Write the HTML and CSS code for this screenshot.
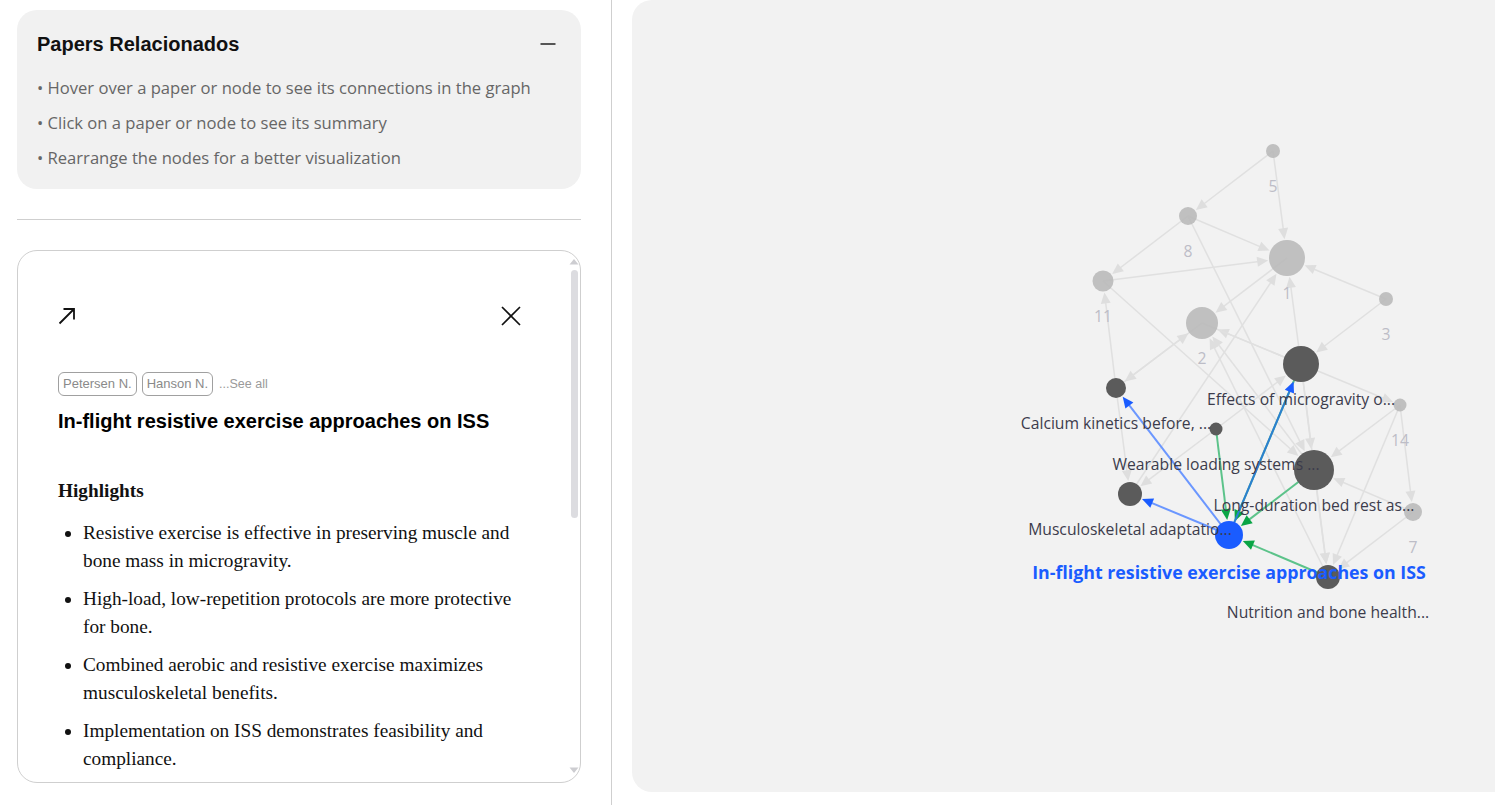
FILE: index.html
```html
<!DOCTYPE html>
<html lang="en">
<head>
<meta charset="utf-8">
<title>Papers Relacionados</title>
<link rel="stylesheet" href="styles.css">
</head>
<body>
<div class="layout">
  <aside class="sidebar">
    <section class="info-card">
      <div class="info-head">
        <h2 class="info-title">Papers Relacionados</h2>
        <button class="icon-btn" aria-label="Collapse">
          <svg width="16" height="16" viewBox="0 0 16 16"><line x1="0.5" y1="8" x2="15.5" y2="8" stroke="#222" stroke-width="1.5"/></svg>
        </button>
      </div>
      <ul class="tips">
        <li>• Hover over a paper or node to see its connections in the graph</li>
        <li>• Click on a paper or node to see its summary</li>
        <li>• Rearrange the nodes for a better visualization</li>
      </ul>
    </section>
    <hr class="divider">
    <article class="paper-card">
      <div class="paper-scroll">
        <div class="paper-actions">
          <button class="icon-btn" aria-label="Open paper">
            <svg width="18" height="18" viewBox="0 0 18 18"><path d="M1.5 16.5 L16 2 M5.5 2 H16 V12.5" fill="none" stroke="#111" stroke-width="1.8"/></svg>
          </button>
          <button class="icon-btn" aria-label="Close">
            <svg width="20" height="20" viewBox="0 0 20 20"><path d="M1 1 L19 19 M19 1 L1 19" fill="none" stroke="#111" stroke-width="1.7"/></svg>
          </button>
        </div>
        <div class="authors">
          <span class="chip">Petersen N.</span>
          <span class="chip">Hanson N.</span>
          <span class="see-all">...See all</span>
        </div>
        <h3 class="paper-title">In-flight resistive exercise approaches on ISS</h3>
        <h4 class="section-title">Highlights</h4>
        <ul class="highlights">
          <li>Resistive exercise is effective in preserving muscle and bone mass in microgravity.</li>
          <li>High-load, low-repetition protocols are more protective for bone.</li>
          <li>Combined aerobic and resistive exercise maximizes musculoskeletal benefits.</li>
          <li>Implementation on ISS demonstrates feasibility and compliance.</li>
        </ul>
      </div>
      <div class="scrollbar" aria-hidden="true">
        <svg class="sb-arrow" width="12" height="7" viewBox="0 0 12 7"><path d="M1.5 6.5 L6 1 L10.5 6.5 Z" fill="#cdcdd1"/></svg>
        <div class="sb-thumb"></div>
        <div class="sb-space"></div>
        <svg class="sb-arrow sb-down" width="12" height="7" viewBox="0 0 12 7"><path d="M1.5 0.5 L6 6 L10.5 0.5 Z" fill="#cdcdd1"/></svg>
      </div>
    </article>
  </aside>
  <main class="graph-area">
    <div class="graph-panel">
      <svg id="graph" class="graph" width="883" height="792" viewBox="632 0 883 792" xmlns="http://www.w3.org/2000/svg"></svg>
    </div>
  </main>
</div>
<script src="script.js"></script>
</body>
</html>
```

FILE: styles.css
```css
* { box-sizing: border-box; }
html, body { margin: 0; height: 100%; }
body {
  font-family: "Liberation Sans", Arial, sans-serif;
  background: #fff;
  color: #111;
  overflow: hidden;
}
.layout { display: flex; height: 805px; }

.sidebar {
  width: 612px;
  flex: none;
  border-right: 1px solid #cfcfcf;
  padding: 10px 30px 0 17px;
}
.info-card {
  background: #f1f1f1;
  border-radius: 20px;
  padding: 23px 25px 13px 20px;
  height: 179px;
}
.info-head { display: flex; justify-content: space-between; align-items: center; }
.info-title { margin: 0; font-size: 20px; line-height: 22px; font-weight: 700; color: #111; }
.icon-btn { border: 0; background: none; padding: 0; margin: 0; display: flex; cursor: pointer; }
.tips {
  list-style: none;
  margin: 15px 0 0;
  padding: 0;
  font-family: "Open Sans", sans-serif;
  font-size: 16.6px;
  line-height: 35px;
  color: #666;
}
.divider { border: 0; border-top: 1px solid #cfcfcf; margin: 30px 0 0; }

.paper-card {
  margin-top: 30px;
  height: 533px;
  border: 1px solid #cfcfcf;
  border-radius: 20px;
  overflow: hidden;
  background: #fff;
  display: flex;
}
.paper-scroll {
  flex: 1;
  min-width: 0;
  overflow: hidden;
  padding: 55px 47px 0 40px;
}
.scrollbar {
  flex: none;
  width: 12px;
  display: flex;
  flex-direction: column;
  align-items: center;
  padding: 7px 0 8px;
}
.sb-arrow { display: block; flex: none; }
.sb-thumb {
  width: 7px;
  height: 248px;
  margin-top: 5px;
  border-radius: 4px;
  background: #dcdce0;
  flex: none;
}
.sb-space { flex: 1; }

.paper-actions { display: flex; justify-content: space-between; align-items: center; height: 20px; }
.authors { display: flex; align-items: center; gap: 5px; margin-top: 46px; }
.chip {
  border: 1px solid #a0a0a0;
  border-radius: 6px;
  color: #8a8a8a;
  font-size: 13px;
  line-height: 22px;
  padding: 0 4px;
}
.see-all { color: #9a9a9a; font-size: 12.5px; margin-left: 1px; }
.paper-title { margin: 13px 0 0; font-size: 20px; line-height: 24px; font-weight: 700; color: #000; }
.section-title {
  margin: 46px 0 0;
  font-family: "Liberation Serif", "Times New Roman", serif;
  font-size: 19.3px;
  line-height: 24px;
  font-weight: 700;
}
.highlights {
  margin: 16px 0 0;
  padding-left: 25px;
  font-family: "Liberation Serif", "Times New Roman", serif;
  font-size: 19.3px;
  line-height: 28px;
  color: #111;
}
.highlights li { margin-bottom: 10px; }

.graph-area { flex: 1; min-width: 0; padding-left: 20px; }
.graph-panel {
  width: 883px;
  height: 792px;
  background: #f2f2f2;
  border-radius: 20px;
  overflow: hidden;
}
.graph { display: block; font-family: "Open Sans", "Noto Sans", sans-serif; }
.n-faded { fill: #b8b8b8; fill-opacity: 0.88; }
.n-dark { fill: #5b5b5b; }
.n-sel { fill: #1a5cff; }
.l-faded { fill: #bdbdc7; font-size: 15.7px; }
.l-dark { fill: #3c3c4c; font-size: 15.7px; }
.l-sel { fill: #1a5cff; font-size: 17.8px; font-weight: 700; }
```

FILE: script.js
```js
(function () {
  var NS = 'http://www.w3.org/2000/svg';
  var svg = document.getElementById('graph');
  if (!svg) return;

  var nodes = {
    n5:   { x: 1273, y: 151, r: 7,   label: '5',  kind: 'faded' },
    n8:   { x: 1188, y: 216, r: 9,   label: '8',  kind: 'faded' },
    n1:   { x: 1287, y: 258, r: 18,  label: '1',  kind: 'faded' },
    n11:  { x: 1103, y: 281, r: 10.5, label: '11', kind: 'faded' },
    n3:   { x: 1386, y: 299, r: 7,   label: '3',  kind: 'faded' },
    n2:   { x: 1202, y: 323, r: 16,  label: '2',  kind: 'faded' },
    n14:  { x: 1400, y: 405, r: 6.5, label: '14', kind: 'faded' },
    n7:   { x: 1413, y: 512, r: 9,   label: '7',  kind: 'faded' },
    eff:  { x: 1301, y: 364, r: 18,  label: 'Effects of microgravity o...', kind: 'dark' },
    cal:  { x: 1116, y: 388, r: 10,  label: 'Calcium kinetics before, ...', kind: 'dark' },
    wear: { x: 1216, y: 429, r: 6.5, label: 'Wearable loading systems ...', kind: 'dark' },
    lng:  { x: 1314, y: 470, r: 20,  label: 'Long-duration bed rest as...', kind: 'dark' },
    mus:  { x: 1130, y: 494, r: 12,  label: 'Musculoskeletal adaptatio...', kind: 'dark' },
    sel:  { x: 1229, y: 535, r: 14,  label: 'In-flight resistive exercise approaches on ISS', kind: 'sel' },
    nut:  { x: 1328, y: 577, r: 12,  label: 'Nutrition and bone health...', kind: 'dark' }
  };

  var edges = [
    ['n5', 'n8'], ['n5', 'n1'], ['n8', 'n1'], ['n8', 'n11'], ['n11', 'n1'],
    ['n3', 'n1'], ['n1', 'n2'], ['n8', 'lng'], ['n11', 'lng'], ['cal', 'n11'],
    ['n2', 'cal'], ['cal', 'n2'], ['mus', 'n1'], ['eff', 'n1'], ['n3', 'eff'],
    ['nut', 'n2'], ['lng', 'n2'], ['eff', 'n2'], ['wear', 'eff'], ['wear', 'mus'],
    ['cal', 'mus'], ['n14', 'lng'], ['n14', 'n7'], ['n14', 'nut'], ['n7', 'nut'],
    ['lng', 'nut'], ['eff', 'lng'], ['n7', 'lng'], ['n2', 'n14'], ['eff', 'nut'],
    ['sel', 'cal', 'blue'], ['sel', 'mus', 'blue'],
    ['eff', 'sel', 'green'], ['sel', 'eff', 'blue2'],
    ['wear', 'sel', 'green'], ['lng', 'sel', 'green'], ['nut', 'sel', 'green']
  ];

  var styles = {
    faded: { line: '#e0e0e0', arrow: '#dedede', w: 1.5 },
    green: { line: '#5cc38a', arrow: '#0aa545', w: 2 },
    blue:  { line: '#6b97ff', arrow: '#1a5cff', w: 2 },
    blue2: { line: '#2b7fd1', arrow: '#1a5cff', w: 2 }
  };

  function el(tag, attrs, parent) {
    var e = document.createElementNS(NS, tag);
    for (var k in attrs) e.setAttribute(k, attrs[k]);
    if (parent) parent.appendChild(e);
    return e;
  }

  var gFaded = el('g', {}, svg);
  var gHi = el('g', {}, svg);
  var gNodes = el('g', {}, svg);
  var gLabels = el('g', {}, svg);

  edges.forEach(function (e) {
    var s = nodes[e[0]], t = nodes[e[1]];
    var st = styles[e[2] || 'faded'];
    var g = e[2] ? gHi : gFaded;
    var dx = t.x - s.x, dy = t.y - s.y;
    var L = Math.sqrt(dx * dx + dy * dy);
    var ux = dx / L, uy = dy / L;
    var tipx = t.x - ux * (t.r + 1), tipy = t.y - uy * (t.r + 1);
    var al = 11, aw = 5;
    var bx = tipx - ux * al, by = tipy - uy * al;
    el('line', {
      x1: s.x, y1: s.y, x2: (bx + ux * 2).toFixed(1), y2: (by + uy * 2).toFixed(1),
      stroke: st.line, 'stroke-width': st.w
    }, g);
    var pts = [
      tipx.toFixed(1) + ',' + tipy.toFixed(1),
      (bx - uy * aw).toFixed(1) + ',' + (by + ux * aw).toFixed(1),
      (bx + uy * aw).toFixed(1) + ',' + (by - ux * aw).toFixed(1)
    ].join(' ');
    el('polygon', { points: pts, fill: st.arrow }, g);
  });

  Object.keys(nodes).forEach(function (id) {
    var n = nodes[id];
    el('circle', { cx: n.x, cy: n.y, r: n.r, 'class': 'n-' + n.kind }, gNodes);
  });

  Object.keys(nodes).forEach(function (id) {
    var n = nodes[id];
    var t = el('text', {
      x: n.x, y: n.y + (n.kind === 'sel' ? 37 : 35),
      'text-anchor': 'middle', 'dominant-baseline': 'central',
      'class': 'l-' + n.kind
    }, gLabels);
    t.textContent = n.label;
  });
})();
```
